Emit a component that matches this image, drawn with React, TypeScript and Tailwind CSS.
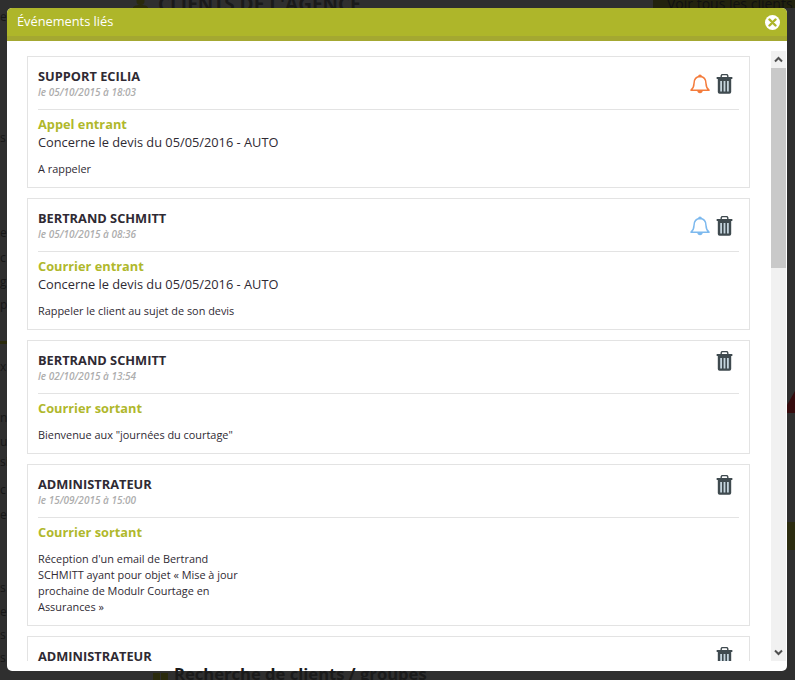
const openSans = "font-['Open_Sans',sans-serif]";

type Evt = {
  author: string;
  date: string;
  kind: string;
  subject?: string;
  note: string[];
  bell?: "orange" | "blue";
};

const events: Evt[] = [
  {
    author: "SUPPORT ECILIA",
    date: "le 05/10/2015 à 18:03",
    kind: "Appel entrant",
    subject: "Concerne le devis du 05/05/2016 - AUTO",
    note: ["A rappeler"],
    bell: "orange",
  },
  {
    author: "BERTRAND SCHMITT",
    date: "le 05/10/2015 à 08:36",
    kind: "Courrier entrant",
    subject: "Concerne le devis du 05/05/2016 - AUTO",
    note: ["Rappeler le client au sujet de son devis"],
    bell: "blue",
  },
  {
    author: "BERTRAND SCHMITT",
    date: "le 02/10/2015 à 13:54",
    kind: "Courrier sortant",
    note: ['Bienvenue aux "journées du courtage"'],
  },
  {
    author: "ADMINISTRATEUR",
    date: "le 15/09/2015 à 15:00",
    kind: "Courrier sortant",
    note: [
      "Réception d'un email de Bertrand",
      "SCHMITT ayant pour objet « Mise à jour",
      "prochaine de Modulr Courtage en",
      "Assurances »",
    ],
  },
  {
    author: "ADMINISTRATEUR",
    date: "le 15/09/2015 à 15:00",
    kind: "Courrier sortant",
    note: ["Bienvenue"],
  },
];

// bits of the page that stick out left of the modal
const leftBits = [
  { text: "e", cls: "mt-[10px]" },
  { text: "s", cls: "mt-[107px]" },
  { text: "e", cls: "mt-[81px]" },
  { text: "c", cls: "mt-[11px]" },
  { text: "g", cls: "mt-[10px]" },
  { text: "p", cls: "mt-[9px]" },
  { text: "x", cls: "mt-[48px]" },
  { text: "n", cls: "mt-[37px]" },
  { text: "u", cls: "mt-[10px]" },
  { text: "si", cls: "mt-[6px]" },
  { text: "c", cls: "mt-[14px]" },
  { text: "e", cls: "mt-[11px]" },
  { text: "s", cls: "mt-[59px]" },
  { text: "e", cls: "mt-[10px]" },
  { text: "s", cls: "mt-[9px]" },
  { text: "s", cls: "mt-[9px]" },
];

function Bell({ color }: { color: string }) {
  return (
    <svg width="20" height="22" viewBox="0 0 20 22" fill="none" stroke={color} strokeWidth="1.500">
      <path d="M1 17.200c2-1.600 2.900-3.600 3-6.700C4.100 6.600 5.800 3.800 10 3.600c4.200.2 5.900 3 6 6.900.1 3.100 1 5.100 3 6.700z" strokeLinejoin="round" />
      <path d="M8.800 3.400c0-1.600 2.400-1.600 2.400 0" />
      <path d="M8 17.500c.2 2.600 3.800 2.600 4 0" fill={color} />
    </svg>
  );
}

function Trash() {
  return (
    <svg width="17" height="20" viewBox="0 0 17 20">
      <path d="M5.200 3V2a1.500 1.500 0 0 1 1.500-1.500h3.600A1.500 1.500 0 0 1 11.800 2v1" fill="none" stroke="#3f4a4f" strokeWidth="1.400" />
      <rect x="0.500" y="3" width="16" height="2" rx="0.700" fill="#3f4a4f" />
      <path d="M1.800 5h13.400v13a1.800 1.800 0 0 1-1.800 1.800H3.600A1.800 1.800 0 0 1 1.800 18z" fill="#3f4a4f" />
      <rect x="4.200" y="7" width="1.800" height="10.500" fill="#c3d3dc" />
      <rect x="7.600" y="7" width="1.800" height="10.500" fill="#c3d3dc" />
      <rect x="11" y="7" width="1.800" height="10.500" fill="#c3d3dc" />
    </svg>
  );
}

function EventCard({ evt }: { evt: Evt }) {
  return (
    <div className="shrink-0 border border-[#e3e3e3] bg-white px-[10px] pt-[10px] pb-[10px]">
      <div className="relative h-[43px] border-b border-[#e3e3e3]">
        <p className="text-[12.800px] leading-[18px] font-bold text-[#2f2a33]">{evt.author}</p>
        <p className="text-[10px] leading-[14px] font-semibold text-[#adadad] italic">{evt.date}</p>
        <div className={`absolute right-[6px] flex items-center gap-[6px] ${evt.bell ? "top-[6px]" : "top-0"}`}>
          {evt.bell && <Bell color={evt.bell === "orange" ? "#f47c3c" : "#7db9ee"} />}
          <Trash />
        </div>
      </div>
      <p className="mt-[5px] text-[12.800px] leading-[18px] font-bold text-[#b0b82c]">{evt.kind}</p>
      {evt.subject && <p className="text-[12.800px] leading-[18px] text-[#2f2a33]">{evt.subject}</p>}
      <div className="mt-[10px] text-[10.900px] leading-[16px] text-[#2f2a33]">
        {evt.note.map((line) => (
          <p key={line}>{line}</p>
        ))}
      </div>
    </div>
  );
}

export default function App() {
  return (
    <div className={`relative h-[680px] w-[795px] overflow-hidden bg-[#2f2f2f] ${openSans}`}>
      {/* page behind the overlay */}
      <div className="flex h-[8px] items-end overflow-hidden">
        <svg className="ml-[133px] shrink-0" width="15" height="8" viewBox="0 0 15 8" fill="#2a2a0c">
          <circle cx="7.500" cy="1" r="4" />
          <path d="M0 8c0-2 3-3 7.500-3S15 6 15 8z" />
        </svg>
        <p className="ml-[10px] text-[19px] leading-[8px] font-bold whitespace-nowrap text-[#1a1a1a]">CLIENTS DE L'AGENCE</p>
        <div className="ml-auto flex h-full w-[142px] items-end bg-[#22220e] pl-[14px]">
          <p className="text-[14px] leading-[8px] whitespace-nowrap text-[#101010]">Voir tous les clients</p>
        </div>
      </div>

      <div className="absolute top-0 left-0 flex w-[7px] flex-col overflow-hidden text-[12px] leading-[14px] text-[#171717]">
        {leftBits.map((b, i) => (
          <span key={i} className={b.cls}>{b.text}</span>
        ))}
      </div>
      <div className="absolute top-[341px] left-0 h-[3px] w-[7px] bg-[#2a2a0c]" />
      <svg className="absolute top-[391px] right-0" width="8" height="22" viewBox="0 0 8 22" fill="#360b0d">
        <path d="M8 0v22H0v-8z" />
      </svg>
      <div className="absolute top-[522px] right-0 h-[28px] w-[8px] bg-[#2c2c10]" />

      <div className="absolute top-[8px] left-[7px] flex h-[663px] w-[780px] flex-col overflow-hidden rounded-[5px] bg-white">
        <div className="flex h-[33px] shrink-0 items-center justify-between border-b-[5px] border-[#a4a831] bg-[#aeb62a] pr-[7px] pl-[10px]">
          <span className="text-[12.800px] text-white">Événements liés</span>
          <span className="flex h-[15px] w-[15px] items-center justify-center rounded-full bg-white">
            <svg width="9" height="9" viewBox="0 0 9 9" stroke="#aeb62a" strokeWidth="2.400" strokeLinecap="round">
              <path d="M1.500 1.500l6 6M7.500 1.500l-6 6" />
            </svg>
          </span>
        </div>

        <div className="mt-[10px] flex h-[610px] min-h-0 pl-[20px]">
          <div className="flex w-[723px] flex-col gap-[10px] overflow-hidden pt-[5px]">
            {events.map((evt, i) => (
              <EventCard key={i} evt={evt} />
            ))}
          </div>
          <div className="ml-[21px] flex w-[15px] flex-col bg-[#f1f1f1]">
            <div className="flex h-[17px] items-center justify-center">
              <svg width="9" height="7" viewBox="0 0 9 7" fill="none" stroke="#505050" strokeWidth="2">
                <path d="M1 5.500l3.500-3.500 3.500 3.500" />
              </svg>
            </div>
            <div className="h-[200px] bg-[#c9c9c9]" />
            <div className="mt-auto flex h-[17px] items-center justify-center">
              <svg width="9" height="7" viewBox="0 0 9 7" fill="none" stroke="#505050" strokeWidth="2">
                <path d="M1 1.500l3.500 3.500 3.500-3.500" />
              </svg>
            </div>
          </div>
        </div>
      </div>

      <div className="absolute top-[663px] left-[153px] flex items-center">
        <span className="mt-[6px] h-[9px] w-[7px] bg-[#2a2a0c]" />
        <span className="mt-[6px] ml-[1px] h-[9px] w-[7px] bg-[#2a2a0c]" />
        <p className="ml-[6px] text-[16.600px] leading-[22px] font-bold whitespace-nowrap text-[#1a1a1a]">Recherche de clients / groupes</p>
      </div>
    </div>
  );
}
